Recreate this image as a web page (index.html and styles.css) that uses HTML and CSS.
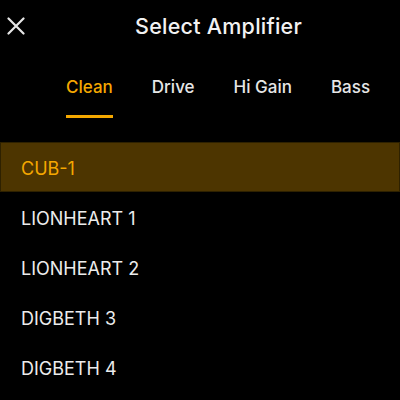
FILE: index.html
```html
<!DOCTYPE html>
<html>
<head>
<meta charset="utf-8">
<link rel="stylesheet" href="styles.css">
</head>
<body>
<div class="screen">
  <header class="header">
    <button class="close" aria-label="Close">
      <svg width="18" height="18" viewBox="0 0 18 18"><path d="M1.5 1.5 L16.5 16.5 M16.5 1.5 L1.5 16.5" stroke="#e6e6e6" stroke-width="2.2" stroke-linecap="round" fill="none"/></svg>
    </button>
    <h1 class="title">Select Amplifier</h1>
  </header>
  <nav class="tabs">
    <div class="tab active">Clean</div>
    <div class="tab">Drive</div>
    <div class="tab">Hi Gain</div>
    <div class="tab">Bass</div>
  </nav>
  <ul class="list">
    <li class="row selected">CUB-1</li>
    <li class="row">LIONHEART 1</li>
    <li class="row">LIONHEART 2</li>
    <li class="row">DIGBETH 3</li>
    <li class="row">DIGBETH 4</li>
  </ul>
</div>
</body>
</html>
```
FILE: styles.css
```css
html, body {
  margin: 0;
  padding: 0;
  background: #000;
}
body {
  font-family: Inter, "Liberation Sans", sans-serif;
  color: #eeeeee;
  width: 400px;
  height: 400px;
  overflow: hidden;
}
.screen {
  display: flex;
  flex-direction: column;
}
.header {
  height: 52px;
  display: flex;
  align-items: center;
  padding: 0 0 0 7px;
}
.close {
  background: none;
  border: 0;
  padding: 0;
  width: 18px;
  height: 18px;
  display: flex;
}
.title {
  margin: 0 0 0 110px;
  font-size: 21.5px;
  font-weight: 500;
  color: #f2f2f2;
  letter-spacing: 0.25px;
}
.tabs {
  display: flex;
  gap: 39px;
  padding-left: 66px;
}
.tab {
  font-size: 17px;
  line-height: 20px;
  font-weight: 500;
  padding-top: 25px;
  padding-bottom: 18px;
  border-bottom: 3px solid transparent;
  color: #e6e6e6;
}
.tab.active {
  color: #f5a800;
  border-bottom-color: #f5a800;
}
.list {
  list-style: none;
  margin: 24px 0 0;
  padding: 0;
}
.row {
  height: 50px;
  box-sizing: border-box;
  padding: 4px 21px 0;
  line-height: 46px;
  font-size: 18px;
  color: #ececec;
}
.row.selected {
  background: #4d3500;
  border: 1px solid #2e2100;
  padding: 3px 20px 0;
  color: #f5a800;
}
```
